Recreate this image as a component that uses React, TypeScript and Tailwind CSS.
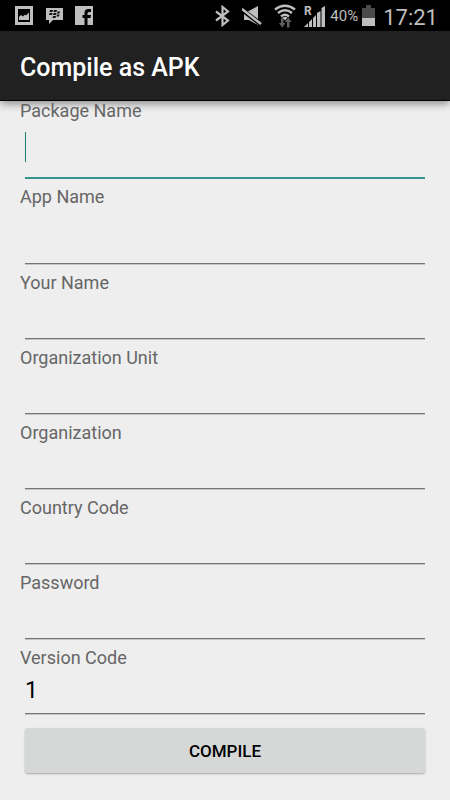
import { useState } from "react";

const FIELDS = [
    { id: "packageName", label: "Package Name", tall: true },
    { id: "appName", label: "App Name", tall: true },
    { id: "yourName", label: "Your Name" },
    { id: "organizationUnit", label: "Organization Unit" },
    { id: "organization", label: "Organization" },
    { id: "countryCode", label: "Country Code" },
    { id: "password", label: "Password", type: "password" },
    { id: "versionCode", label: "Version Code" },
];

function StatusBar() {
    return (
        <div className="flex h-[31px] items-center justify-between bg-black pl-[15px] pr-3 text-[#bebebe]">
            <div className="flex items-center gap-3">
                <svg width="18" height="19" viewBox="0 0 18 19" aria-label="Picture">
                    <path fill="#bebebe" fillRule="evenodd" d="M0 0h18v19H0zM3 3v13h12V3z" />
                    <path fill="#bebebe" d="M4 14v-3l2-2 2 1.500 2-2 1 1 3-3V14z" />
                </svg>
                <svg width="18" height="19" viewBox="0 0 18 19" aria-label="Messenger">
                    <path fill="#bebebe" d="M1 2h17v12H8l-4 4v-4H1z" />
                    <path fill="#111" d="M5 4h3l-.5 2h-3zM9 4h3l-.5 2h-3zM4.500 7h3L7 9H4zM8.500 7h3L11 9H8zM12.500 5.500h2.500l-.5 2H12zM12 8.500h2.500l-.5 2h-2.500zM8 10h3l-.5 2h-3z" />
                </svg>
                <svg width="18" height="19" viewBox="0 0 18 19" aria-label="Facebook">
                    <path fill="#bebebe" d="M0 0h18v19H0z" />
                    <path fill="#000" d="M9.500 19v-7H7.500V9h2V7q0-4 4-4H16v3h-2q-1.500 0-1.500 1.500V9H16l-.5 3h-3v7z" />
                </svg>
            </div>
            <div className="flex items-center">
                <svg className="mr-3" width="15" height="22" viewBox="0 0 15 22" aria-label="Bluetooth">
                    <path fill="none" stroke="#bebebe" strokeWidth="2.200" d="M1 6.500l12 9-5.500 4.500V2L13 6.500l-12 9" />
                </svg>
                <svg className="mr-3" width="20" height="20" viewBox="0 0 20 20" aria-label="Muted">
                    <path fill="#bebebe" d="M2 5h5l9-5v19l-9-5H2z" />
                    <path stroke="#000" strokeWidth="4.500" d="M-1 3l21 16" />
                    <path stroke="#bebebe" strokeWidth="2.500" d="M0 3l19 15" />
                </svg>
                <svg className="mr-2" width="22" height="24" viewBox="0 0 22 24" aria-label="Wi-Fi">
                    <g fill="none" stroke="#bebebe" strokeWidth="2.400">
                        <path d="M1 5.500Q11-2 21 5.500" />
                        <path d="M4 9Q11 3.500 18 9" />
                        <path d="M7 12.500Q11 9 15 12.500" />
                    </g>
                    <path fill="#606060" d="M7 14h2.500v5h2l-3.300 4.500-3.300-4.500H7zM13 23.500h2.500V18h2l-3.300-4.500-3.300 4.500H13z" />
                    <path fill="#bebebe" d="M8.500 13.500q2.500-1.500 5 0l-2.500 3z" />
                </svg>
                <svg className="mr-1" width="22" height="22" viewBox="0 0 22 22" aria-label="Signal, roaming">
                    <path fill="#bebebe" d="M17.500 3l3.500-2v21h-3.500zM13 8l3.500-2v16H13zM9 13l3-3v12H9zM5 17l3-3v8H5zM0 22l4-4v4z" />
                    <text x="0" y="10" fill="#bebebe" className="font-['Roboto'] text-[12px] font-bold">R</text>
                </svg>
                <span className="mr-1 pt-0.5 text-[15px]">40%</span>
                <svg className="mr-2" width="13" height="21" viewBox="0 0 13 21" aria-label="Battery">
                    <path fill="#4a4a4a" d="M4 0h5v3h4v10H0V3h4z" />
                    <path fill="#bebebe" d="M0 13h13v8H0z" />
                </svg>
                <span className="pt-1 text-[22px] leading-7">17:21</span>
            </div>
        </div>
    );
}

export default function App() {
    const [values, setValues] = useState<Record<string, string>>({ versionCode: "1" });
    const [focused, setFocused] = useState<string>("packageName");

    const handleChange = (id: string, value: string) => {
        setValues({ ...values, [id]: value });
    };

    return (
        <div className="min-h-screen bg-[#eeeeee] font-['Roboto',sans-serif]">
            <StatusBar />
            <header className="flex h-[70px] items-center border-b border-black bg-[#212121] px-5 pt-1 shadow-[0_3px_8px_rgba(0,0,0,0.4)]">
                <h1 className="text-[25px] font-medium text-white">Compile as APK</h1>
            </header>
            <form className="px-5 pb-6" onSubmit={(e) => e.preventDefault()}>
                {FIELDS.map((field) => (
                    <div key={field.id} className="mb-2 flex flex-col">
                        <label htmlFor={field.id} className="text-[18px] leading-5 text-[#666666]">
                            {field.label}
                        </label>
                        <div className={`relative mx-[5px] ${field.tall ? "h-[58px]" : "h-[47px]"} ${focused === field.id ? "" : "pb-px"}`}>
                            <input
                                id={field.id}
                                type={field.type ?? "text"}
                                value={values[field.id] ?? ""}
                                onChange={(e) => handleChange(field.id, e.target.value)}
                                onFocus={() => setFocused(field.id)}
                                className={`block h-full w-full bg-transparent text-[23px] text-black caret-[#1b8071] outline-none ${
                                    focused === field.id
                                        ? "border-b-2 border-[#36958c]"
                                        : "border-b border-[#757575] shadow-[0_1px_0_#c4c4c4]"
                                }`}
                            />
                            {focused === field.id && !values[field.id] && (
                                <span className="pointer-events-none absolute left-0 top-[11px] h-[30px] w-px bg-[#1b8071]" />
                            )}
                        </div>
                    </div>
                ))}
                <button
                    type="submit"
                    className="mx-[5px] mt-[13px] block h-[45px] w-[calc(100%-10px)] rounded-[3px] bg-[#d6d8d7] pt-0.5 text-[17px] font-medium text-black shadow-[0_1px_2px_rgba(0,0,0,0.3)]"
                >
                    COMPILE
                </button>
            </form>
        </div>
    );
}
